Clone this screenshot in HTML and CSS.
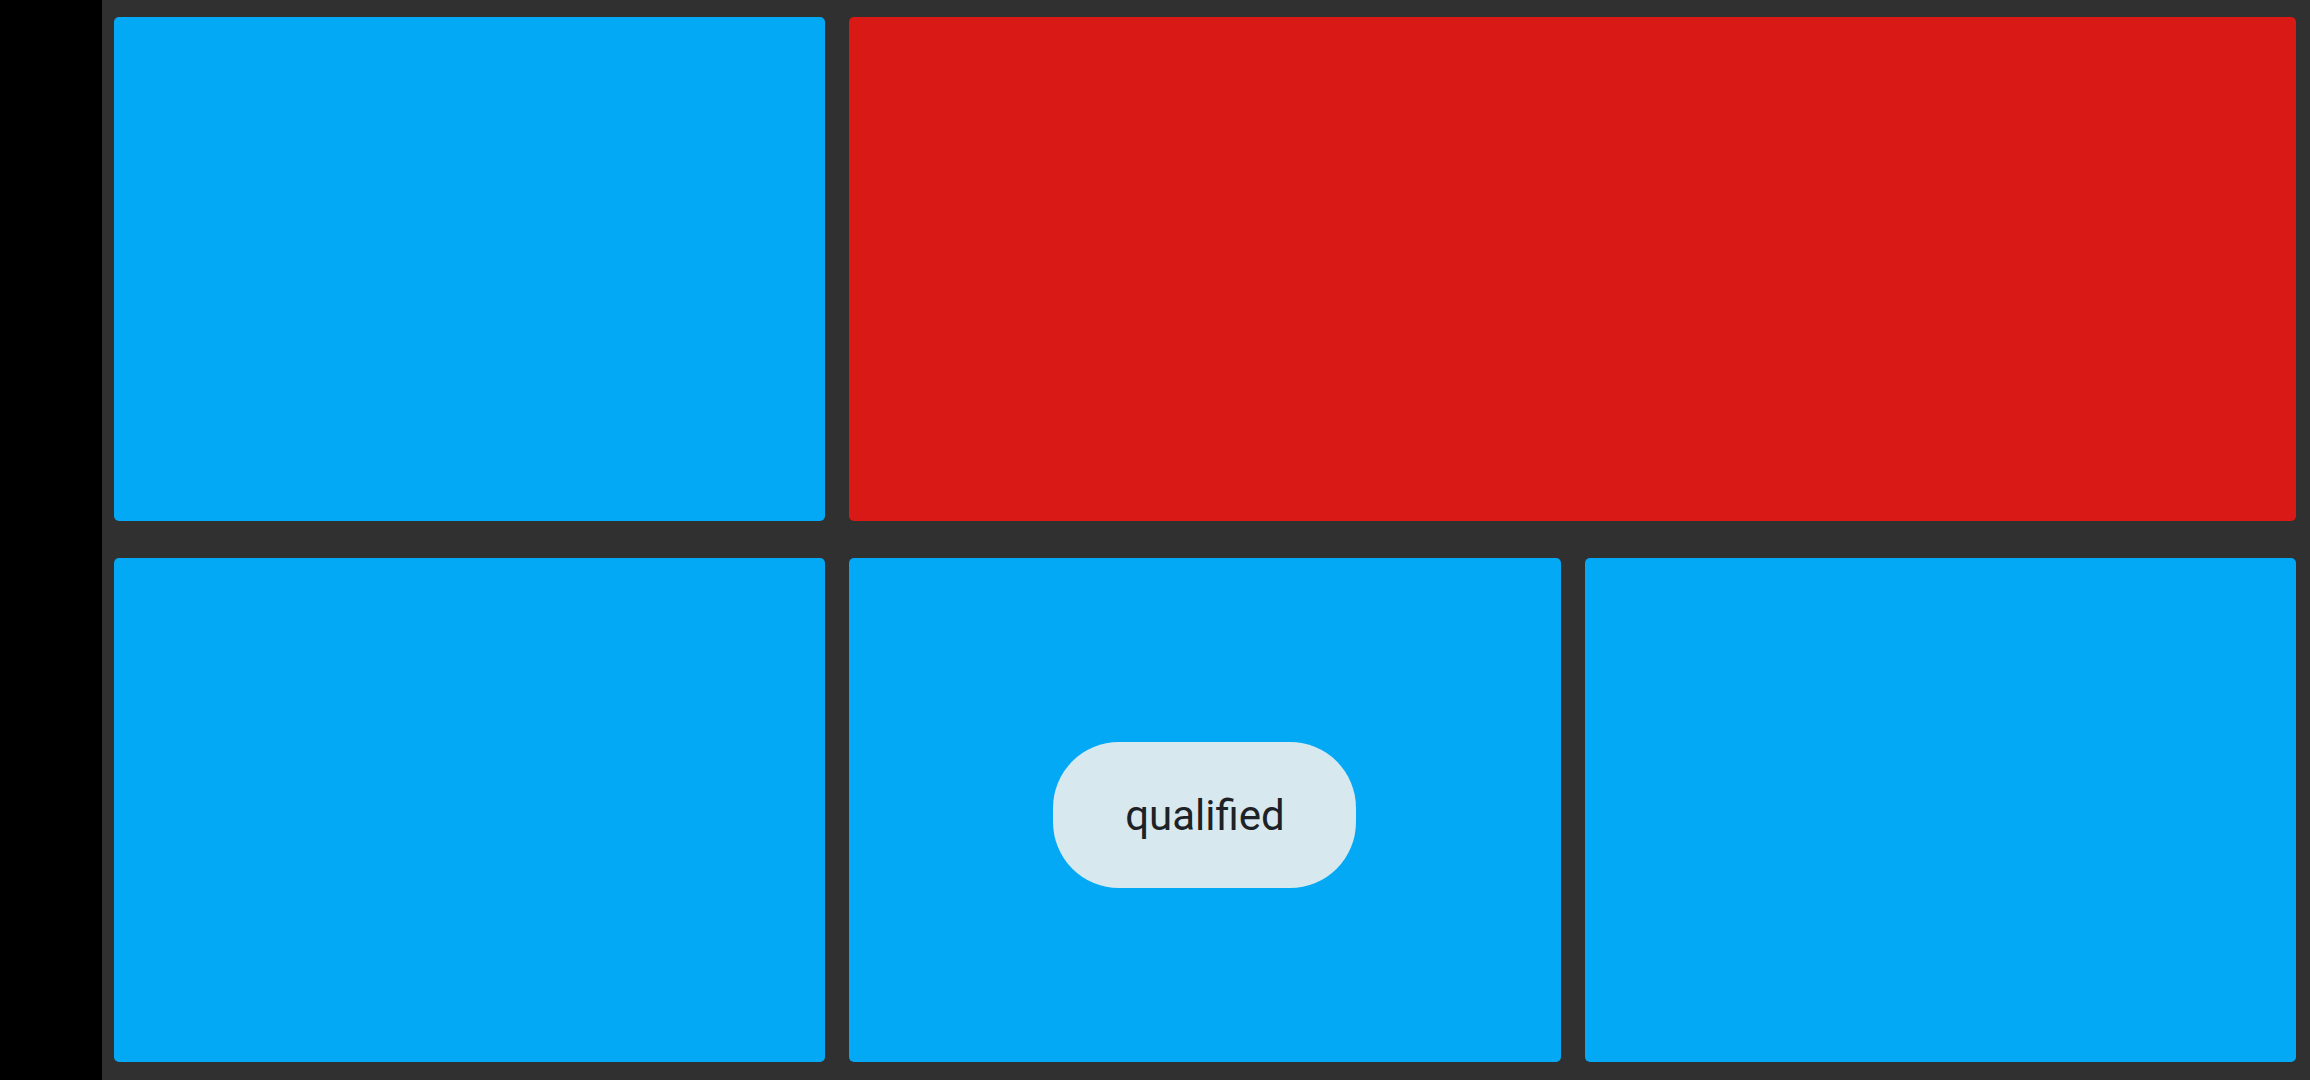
FILE: index.html
```html
<!DOCTYPE html>
<html>
<head>
<meta charset="utf-8">
<link rel="stylesheet" href="styles.css">
</head>
<body>
<div class="app">
  <aside class="side"></aside>
  <main class="board">
    <div class="tile blue"></div>
    <div class="tile red wide"></div>
    <div class="tile blue"></div>
    <div class="tile blue center">
      <div class="pill">qualified</div>
    </div>
    <div class="tile blue"></div>
  </main>
</div>
</body>
</html>
```
FILE: styles.css
```css
html, body {
  margin: 0;
  padding: 0;
  width: 2310px;
  height: 1080px;
  overflow: hidden;
  background: #000;
}
.app {
  display: flex;
  width: 2310px;
  height: 1080px;
}
.side {
  width: 102px;
  flex: none;
  background: #000;
}
.board {
  flex: 1;
  background: #303030;
  box-sizing: border-box;
  padding: 17px 14px 18px 12px;
  display: grid;
  grid-template-columns: 1fr 1fr 1fr;
  grid-template-rows: 1fr 1fr;
  column-gap: 24px;
  row-gap: 37px;
}
.tile {
  border-radius: 5px;
}
.blue { background: #03A9F4; }
.red { background: #D81916; }
.wide { grid-column: span 2; }
.center {
  display: flex;
  align-items: center;
  justify-content: center;
  padding-top: 10px;
  box-sizing: border-box;
}
.pill {
  width: 303px;
  height: 146px;
  border-radius: 66px;
  background: #D7E8EF;
  display: flex;
  align-items: center;
  justify-content: center;
  font-family: Roboto, "Liberation Sans", sans-serif;
  font-size: 42px;
  color: #1d2226;
}
```
